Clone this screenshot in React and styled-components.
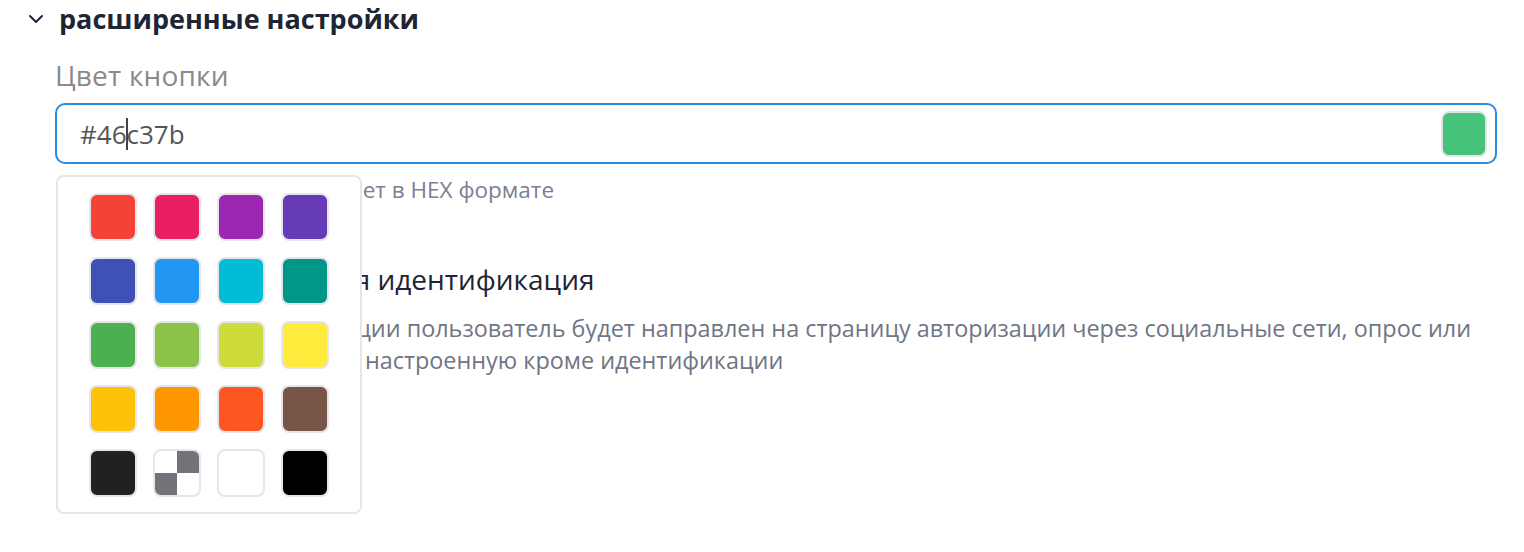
import React from "react";
import styled, { createGlobalStyle } from "styled-components";

const Global = createGlobalStyle`
  html, body { margin: 0; padding: 0; background: #fff; }
  body { font-family: "Open Sans", "Noto Sans", sans-serif; }
`;

const Page = styled.div`
  width: 1524px;
  height: 552px;
  box-sizing: border-box;
  padding: 0 27px 0 28px;
  overflow: hidden;
`;

const SectionHeader = styled.div`
  display: flex;
  align-items: center;
  gap: 15px;
  height: 38px;
`;

const SectionTitle = styled.h2`
  margin: 0;
  font-size: 27px;
  font-weight: 700;
  color: #1e2535;
  line-height: 38px;
`;

const Body = styled.div`
  padding-left: 27px;
`;

const Label = styled.div`
  margin-top: 19px;
  font-size: 28px;
  letter-spacing: 0.2px;
  color: #8a8a8a;
  line-height: 36px;
`;

const Field = styled.div`
  position: relative;
  margin-top: 10px;
`;

const InputBox = styled.div`
  display: flex;
  align-items: center;
  justify-content: space-between;
  height: 61px;
  box-sizing: border-box;
  border: 2px solid #2a8be3;
  border-radius: 10px;
  padding: 0 8px 0 23px;
`;

const Value = styled.span`
  font-size: 26px;
  color: #555;
  display: flex;
  align-items: center;
`;

const Caret = styled.span`
  display: inline-block;
  width: 2px;
  height: 32px;
  background: #444;
  margin: 0 -1px;
`;

const Preview = styled.div`
  width: 46px;
  height: 46px;
  box-sizing: border-box;
  border-radius: 8px;
  border: 2px solid #e4e4e8;
  background: ${(p) => p.$color};
`;

const Hint = styled.div`
  margin-top: 11px;
  font-size: 22.5px;
  color: #7a8091;
  line-height: 30px;
`;

const Popover = styled.div`
  position: absolute;
  top: 72px;
  left: 1px;
  width: 306px;
  box-sizing: border-box;
  background: #fff;
  border: 2px solid #e6e6ea;
  border-radius: 8px;
  padding: 16px 31px 15px;
  display: grid;
  grid-template-columns: repeat(4, 48px);
  gap: 16px;
  z-index: 2;
`;

const Swatch = styled.div`
  width: 48px;
  height: 48px;
  box-sizing: border-box;
  border-radius: 8px;
  border: 2px solid #e6e6ea;
  background: ${(p) => p.$color};
  overflow: hidden;
`;

const Checker = styled(Swatch)`
  background:
    linear-gradient(#727279, #727279) right top / 50% 50% no-repeat,
    linear-gradient(#727279, #727279) left bottom / 50% 50% no-repeat,
    #fff;
`;

const Option = styled.div`
  margin-top: 56px;
  padding-left: 4px;
`;

const OptionTitle = styled.div`
  display: flex;
  align-items: center;
  gap: 20px;
  font-size: 28px;
  color: #1e2535;
  line-height: 36px;
`;

const Toggle = styled.div`
  width: 60px;
  height: 30px;
  border-radius: 15px;
  background: #d5d8de;
`;

const OptionDesc = styled.p`
  margin: 15px 0 0;
  font-size: 23.4px;
  line-height: 32px;
  color: #6f7585;
`;

const colors = [
  "#f44336", "#e91e63", "#9c27b0", "#673ab7",
  "#3f51b5", "#2196f3", "#00bcd4", "#009688",
  "#4caf50", "#8bc34a", "#cddc39", "#ffeb3b",
  "#ffc107", "#ff9800", "#ff5722", "#795548",
  "#212121", "checker", "#ffffff", "#000000",
];

const Chevron = () => (
  <svg width="16" height="10" viewBox="0 0 16 10" fill="none">
    <path d="M2 2l6 6 6-6" stroke="#1e2535" strokeWidth="2" strokeLinecap="round" strokeLinejoin="round" />
  </svg>
);

export default function App() {
  return (
    <Page>
      <Global />
      <SectionHeader>
        <Chevron />
        <SectionTitle>расширенные настройки</SectionTitle>
      </SectionHeader>
      <Body>
        <Label>Цвет кнопки</Label>
        <Field>
          <InputBox>
            <Value>
              #46<Caret />c37b
            </Value>
            <Preview $color="#46c37b" />
          </InputBox>
          <Popover>
            {colors.map((c, i) =>
              c === "checker" ? <Checker key={i} /> : <Swatch key={i} $color={c} />
            )}
          </Popover>
        </Field>
        <Hint>Выберите или напишите цвет в HEX формате</Hint>
        <Option>
          <OptionTitle>
            <Toggle />
            Принудительная идентификация
          </OptionTitle>
          <OptionDesc>
            При наличии идентификации пользователь будет направлен на страницу авторизации через социальные сети, опрос или любую другую активность настроенную кроме идентификации
          </OptionDesc>
        </Option>
      </Body>
    </Page>
  );
}
